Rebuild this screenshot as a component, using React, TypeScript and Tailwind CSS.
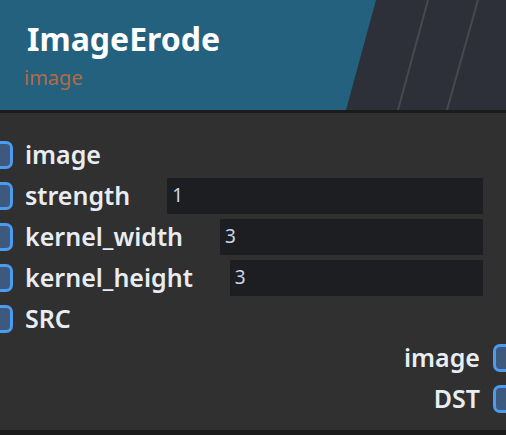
const font = { fontFamily: '"Noto Sans", "Open Sans", sans-serif' }

type Row = { label: string; value?: string }

const inputs: Row[] = [
  { label: "image" },
  { label: "strength", value: "1" },
  { label: "kernel_width", value: "3" },
  { label: "kernel_height", value: "3" },
  { label: "SRC" },
]

const outputs = ["image", "DST"]

function Port() {
  return (
    <div className="h-[28px] w-[28px] shrink-0 rounded-[7px] border-[3px] border-[#4d9bef] bg-[#3d5a7e]" />
  )
}

function Header() {
  return (
    <div className="relative h-[110px] overflow-hidden bg-[#2d3039]">
      <div className="absolute inset-0 bg-[#24617f] [clip-path:polygon(0_0,376px_0,346px_100%,0_100%)]" />
      <svg className="absolute inset-0" width="506" height="110">
        <line x1="428" y1="0" x2="398" y2="110" stroke="#46494e" strokeWidth="2" />
        <line x1="478" y1="0" x2="447" y2="110" stroke="#46494e" strokeWidth="2" />
      </svg>
      <div className="relative pl-[27px] pt-[19px]">
        <div className="text-[32px] font-bold leading-[40px] text-white">ImageErode</div>
        <div className="-ml-[3px] mt-[6px] text-[20px] leading-[26px] text-[#b06c45]">image</div>
      </div>
    </div>
  )
}

function InputRow({ label, value }: Row) {
  return (
    <div className="flex h-[41px] items-center">
      <div className="-ml-[15px] mr-[12px]">
        <Port />
      </div>
      <span className="text-[25px] font-semibold text-[#e8edf3]">{label}</span>
      {value && (
        <div className="ml-[37px] mr-[23px] flex h-[36px] flex-1 items-center bg-[#1c1e21] pl-[5px] text-[19px] text-[#c9d6ea]">
          {value}
        </div>
      )}
    </div>
  )
}

function OutputRow({ label }: { label: string }) {
  return (
    <div className="flex h-[41px] items-center justify-end">
      <span className="text-[25px] font-semibold text-[#e8edf3]">{label}</span>
      <div className="-mr-[15px] ml-[13px]">
        <Port />
      </div>
    </div>
  )
}

export default function App() {
  return (
    <div className="h-[435px] w-[506px] overflow-hidden bg-[#1b1b1b]" style={font}>
      <Header />
      <div className="mt-[3px] h-[317px] bg-[#303030] pt-[21px]">
        {inputs.map((row, i) => (
          <InputRow key={i} {...row} />
        ))}
        <div className="-mt-[2px]">
          {outputs.map((label, i) => (
            <OutputRow key={i} label={label} />
          ))}
        </div>
      </div>
    </div>
  )
}
